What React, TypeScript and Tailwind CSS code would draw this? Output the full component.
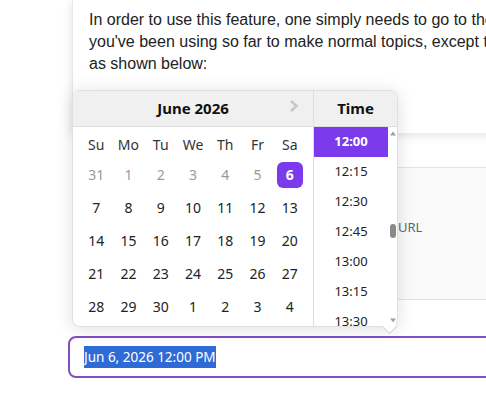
import React from 'react'

const weeks = [
  [31, 1, 2, 3, 4, 5, 6],
  [7, 8, 9, 10, 11, 12, 13],
  [14, 15, 16, 17, 18, 19, 20],
  [21, 22, 23, 24, 25, 26, 27],
  [28, 29, 30, 1, 2, 3, 4],
]
const dayNames = ['Su', 'Mo', 'Tu', 'We', 'Th', 'Fr', 'Sa']
const times = ['12:00', '12:15', '12:30', '12:45', '13:00', '13:15', '13:30']

function DatePicker() {
  return (
    <div className="absolute left-[72px] top-[90px] w-[326px] h-[237px] flex rounded-[8px] border border-[#e0e0e0] bg-white shadow-[0_2px_18px_rgba(0,0,0,0.13)] font-['Noto_Sans',sans-serif] text-[#222]">
      {/* days */}
      <div className="w-[241px] flex flex-col">
        <div className="relative h-[36px] shrink-0 flex items-center justify-center bg-[#f0f0f0] border-b border-[#dedede] rounded-tl-[8px] text-[15px] font-bold text-[#111]">
          June 2026
          <svg className="absolute left-[216px] top-[8px]" width="10" height="14" viewBox="0 0 10 14">
            <path d="M2 2 L7.5 7 L2 12" fill="none" stroke="#c8c8c8" strokeWidth="2.6" />
          </svg>
        </div>
        <div className="px-[7px] pt-[4px] text-[14px]">
          <div className="grid grid-cols-7 h-[27px] items-center text-center text-[#333]">
            {dayNames.map((d) => (
              <div key={d}>{d}</div>
            ))}
          </div>
          <div className="mt-[3px] flex flex-col gap-[6px]">
            {weeks.map((w, wi) => (
              <div key={wi} className="grid grid-cols-7 h-[27px] items-center">
                {w.map((d, di) => {
                  const selected = wi === 0 && d === 6
                  const prev = wi === 0 && di < 6
                  return (
                    <div key={di} className="flex justify-center">
                      <div
                        className={
                          selected
                            ? 'w-[26px] h-[26px] rounded-[6px] bg-[#7c3aed] text-white font-bold flex items-center justify-center'
                            : prev
                            ? 'text-[#9a9a9a]'
                            : 'text-[#222]'
                        }
                      >
                        {d}
                      </div>
                    </div>
                  )
                })}
              </div>
            ))}
          </div>
        </div>
      </div>
      {/* time */}
      <div className="w-[84px] border-l border-[#dedede] flex flex-col">
        <div className="h-[36px] shrink-0 flex items-center justify-center bg-[#f0f0f0] border-b border-[#dedede] rounded-tr-[8px] text-[15px] font-bold text-[#111]">
          Time
        </div>
        <div className="flex flex-1 overflow-hidden rounded-br-[8px]">
          <div className="w-[75px] flex flex-col text-[13px]">
            {times.map((t, i) => (
              <div
                key={t}
                className={
                  'h-[30px] shrink-0 flex items-center justify-center ' +
                  (i === 0 ? 'bg-[#7c3aed] text-white font-bold' : 'text-[#222]')
                }
              >
                {t}
              </div>
            ))}
          </div>
          <div className="w-[9px] flex flex-col items-center bg-white">
            <svg className="mt-[4px]" width="6" height="5" viewBox="0 0 6 5">
              <path d="M0 4.5 L3 0.5 L6 4.5 Z" fill="#a0a0a0" />
            </svg>
            <div className="mt-[88px] w-[6px] h-[14px] rounded-full bg-[#8a8a8a]" />
            <div className="flex-1" />
            <svg className="mb-[3px]" width="6" height="5" viewBox="0 0 6 5">
              <path d="M0 0.5 L3 4.5 L6 0.5 Z" fill="#a0a0a0" />
            </svg>
          </div>
        </div>
      </div>
    </div>
  )
}

export default function App() {
  return (
    <div className="relative w-[486px] h-[398px] overflow-hidden bg-white">
      <div className="ml-[72px] w-[640px] h-[133px] bg-white border-l border-[#e6e6e6] shadow-[0_2px_10px_rgba(0,0,0,0.12)] px-4 pt-[9px] font-['Liberation_Sans',Arial,sans-serif] text-[16px] leading-[22px] text-[#222] whitespace-nowrap">
        In order to use this feature, one simply needs to go to the same form
        <br />
        you've been using so far to make normal topics, except that the date
        <br />
        as shown below:
      </div>
      <div className="mt-[34px] ml-[72px] w-[640px] h-[133px] bg-[#fafafa] border-y border-[#e2e2e2] flex items-center pb-[12px] font-['Noto_Sans',sans-serif] text-[13px] text-[#666]">
        <span className="pl-[326px]">URL</span>
      </div>
      <div className="h-[36px] ml-[84px] pt-[8px] font-['Noto_Sans',sans-serif] text-[14px] font-bold text-[#222]">
        Event date and time (optional):
      </div>
      <div className="ml-[68px] w-[520px] h-[42px] border-2 border-[#7f4fc4] rounded-[8px] px-[14px] flex items-center font-['Noto_Sans',sans-serif] text-[13.5px] text-[#222]">
        <span className="bg-[#2f6bd6] text-white leading-[22px]">Jun 6, 2026 12:00 PM</span>
      </div>
      <DatePicker />
      <div className="absolute left-[384px] top-[321px] w-[11px] h-[11px] rotate-45 bg-white border-r border-b border-[#d4d4d4]" />
    </div>
  )
}
